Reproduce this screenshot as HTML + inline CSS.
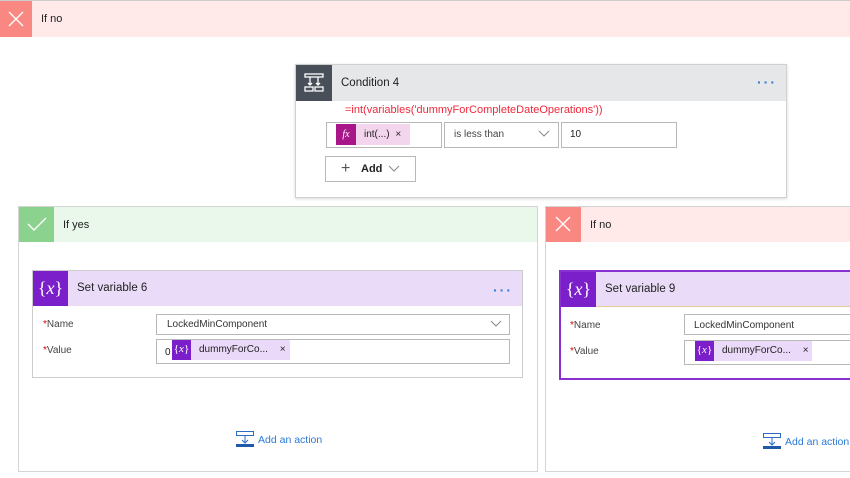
<!DOCTYPE html>
<html><head><style>
*{box-sizing:border-box;margin:0;padding:0}
body{width:850px;height:478px;overflow:hidden;background:#fff;font-family:"Liberation Sans",sans-serif;font-size:11px;color:#222;position:relative}
.a{position:absolute}
.inp{position:absolute;border:1px solid #b8b8b8;background:#fff}
.lbl{position:absolute;color:#444;font-size:10px}
.lbl b{color:#d00;font-weight:normal}
.dots{position:absolute;color:#2d7bd6;font-size:14px;letter-spacing:2px;font-weight:bold}
.chip{position:absolute;background:#ead9f8;height:20px}
.vx{position:absolute;background:#7a1fc9;color:#fff;font-family:"Liberation Serif",serif;text-align:center}
</style></head><body>
<div class="a" style="left:0;top:0;width:850px;height:1px;background:#ccc"></div>
<div class="a" style="left:0;top:1px;width:850px;height:36px;background:#ffe9e9"></div>
<div class="a" style="left:0;top:1px;width:32px;height:36px;background:#f98883"></div>
<svg class="a" style="left:6px;top:9px" width="20" height="20"><path d="M3 3L17 17M17 3L3 17" stroke="#fff" stroke-width="1.3"/></svg>
<div class="a" style="left:41px;top:13px;font-size:11px">If no</div>

<div class="a" style="left:295px;top:64px;width:492px;height:134px;border:1px solid #d0d0d0;background:#fff;box-shadow:0 1px 3px rgba(0,0,0,.15)"></div>
<div class="a" style="left:296px;top:65px;width:490px;height:36px;background:#e6e7e9"></div>
<div class="a" style="left:296px;top:65px;width:36px;height:36px;background:#484f58"></div>
<svg class="a" style="left:302px;top:71px" width="24" height="24" fill="none" stroke="#fff" stroke-width="1.3"><rect x="3" y="3" width="18" height="3"/><path d="M8 6v8M16 6v8M6 12l2 2 2-2M14 12l2 2 2-2"/><rect x="3" y="16" width="8" height="4"/><rect x="13" y="16" width="8" height="4"/></svg>
<div class="a" style="left:341px;top:77px;font-size:11.5px">Condition 4</div>
<div class="dots" style="left:757px;top:74px">···</div>
<div class="a" style="left:345px;top:104px;color:#f0283c;font-size:11px">=int(variables('dummyForCompleteDateOperations'))</div>
<div class="inp" style="left:326px;top:122px;width:116px;height:26px"></div>
<div class="a" style="left:336px;top:124px;width:20px;height:21px;background:#a8168a;color:#fff;font-family:'Liberation Serif',serif;font-style:italic;font-size:10px;text-align:center;line-height:21px">fx</div>
<div class="a" style="left:356px;top:124px;width:54px;height:21px;background:#f3d6ee;font-size:10px;line-height:21px;padding-left:8px">int(...) <span style="margin-left:3px">×</span></div>
<div class="inp" style="left:444px;top:122px;width:115px;height:26px"></div>
<div class="a" style="left:454px;top:129px;font-size:10px;color:#444">is less than</div>
<svg class="a" style="left:538px;top:130px" width="12" height="8"><path d="M1 1l5 5 5-5" stroke="#888" fill="none"/></svg>
<div class="inp" style="left:561px;top:122px;width:116px;height:26px"></div>
<div class="a" style="left:570px;top:129px;font-size:10px">10</div>
<div class="inp" style="left:325px;top:156px;width:91px;height:26px"></div>
<div class="a" style="left:341px;top:160px;font-size:16px;color:#555">+</div>
<div class="a" style="left:361px;top:163px;font-size:11px;font-weight:bold">Add</div>
<svg class="a" style="left:388px;top:165px" width="12" height="8"><path d="M1 1l5 5 5-5" stroke="#888" fill="none"/></svg>

<div class="a" style="left:18px;top:206px;width:520px;height:266px;border:1px solid #d4d4d4"></div>
<div class="a" style="left:19px;top:207px;width:518px;height:35px;background:#e9f8eb"></div>
<div class="a" style="left:19px;top:207px;width:35px;height:35px;background:#8ad28e"></div>
<svg class="a" style="left:26px;top:214px" width="22" height="20"><path d="M2 10l6 6 12-12" stroke="#fff" stroke-width="1.4" fill="none"/></svg>
<div class="a" style="left:63px;top:219px">If yes</div>

<div class="a" style="left:32px;top:270px;width:491px;height:108px;border:1px solid #ccc;background:#fff"></div>
<div class="a" style="left:33px;top:271px;width:489px;height:35px;background:#eadcf8"></div>
<div class="vx" style="left:33px;top:271px;width:35px;height:35px;font-size:18px;line-height:34px">{<i>x</i>}</div>
<div class="a" style="left:77px;top:282px;font-size:11.5px">Set variable 6</div>
<div class="dots" style="left:493px;top:282px">···</div>
<div class="lbl" style="left:43px;top:319px"><b>*</b>Name</div>
<div class="inp" style="left:156px;top:314px;width:354px;height:21px"></div>
<div class="a" style="left:167px;top:319px;font-size:10px;color:#333">LockedMinComponent</div>
<svg class="a" style="left:490px;top:320px" width="12" height="8"><path d="M1 1l5 5 5-5" stroke="#888" fill="none"/></svg>
<div class="lbl" style="left:43px;top:345px"><b>*</b>Value</div>
<div class="inp" style="left:156px;top:339px;width:354px;height:25px"></div>
<div class="a" style="left:165px;top:347px;font-size:10px">0</div>
<div class="vx" style="left:172px;top:340px;width:19px;height:20px;font-size:11px;line-height:19px">{<i>x</i>}</div>
<div class="chip" style="left:191px;top:340px;width:99px;font-size:10px;line-height:20px;padding-left:8px">dummyForCo... <span style="margin-left:9px">×</span></div>

<svg class="a" style="left:236px;top:431px" width="18" height="17" fill="none" stroke="#2a6cc4"><rect x="0.5" y="0.5" width="17" height="4"/><path d="M9 5v7M6 9l3 3 3-3"/><rect x="0" y="13" width="18" height="3" fill="#1f5aa8" stroke="none"/></svg>
<div class="a" style="left:258px;top:434px;color:#2a7ad6;font-size:10.5px">Add an action</div>

<div class="a" style="left:545px;top:206px;width:310px;height:266px;border:1px solid #d4d4d4"></div>
<div class="a" style="left:546px;top:207px;width:304px;height:35px;background:#ffe9e9"></div>
<div class="a" style="left:546px;top:207px;width:35px;height:35px;background:#f98883"></div>
<svg class="a" style="left:553px;top:214px" width="20" height="20"><path d="M3 3L17 17M17 3L3 17" stroke="#fff" stroke-width="1.3"/></svg>
<div class="a" style="left:590px;top:219px">If no</div>

<div class="a" style="left:559px;top:270px;width:300px;height:110px;border:2px solid #8a2fd0;background:#fff"></div>
<div class="a" style="left:561px;top:272px;width:289px;height:35px;background:#eadcf8;border-bottom:1px solid #e8c99a"></div>
<div class="vx" style="left:561px;top:272px;width:35px;height:35px;font-size:18px;line-height:34px">{<i>x</i>}</div>
<div class="a" style="left:605px;top:283px;font-size:11.5px">Set variable 9</div>
<div class="lbl" style="left:570px;top:320px"><b>*</b>Name</div>
<div class="inp" style="left:684px;top:314px;width:180px;height:21px"></div>
<div class="a" style="left:694px;top:320px;font-size:10px;color:#333">LockedMinComponent</div>
<div class="lbl" style="left:570px;top:346px"><b>*</b>Value</div>
<div class="inp" style="left:684px;top:340px;width:180px;height:25px"></div>
<div class="vx" style="left:695px;top:341px;width:19px;height:20px;font-size:11px;line-height:19px">{<i>x</i>}</div>
<div class="chip" style="left:714px;top:341px;width:98px;font-size:10px;line-height:20px;padding-left:8px">dummyForCo... <span style="margin-left:9px">×</span></div>

<svg class="a" style="left:763px;top:433px" width="18" height="17" fill="none" stroke="#2a6cc4"><rect x="0.5" y="0.5" width="17" height="4"/><path d="M9 5v7M6 9l3 3 3-3"/><rect x="0" y="13" width="18" height="3" fill="#1f5aa8" stroke="none"/></svg>
<div class="a" style="left:785px;top:436px;color:#2a7ad6;font-size:10.5px">Add an action</div>
</body></html>
